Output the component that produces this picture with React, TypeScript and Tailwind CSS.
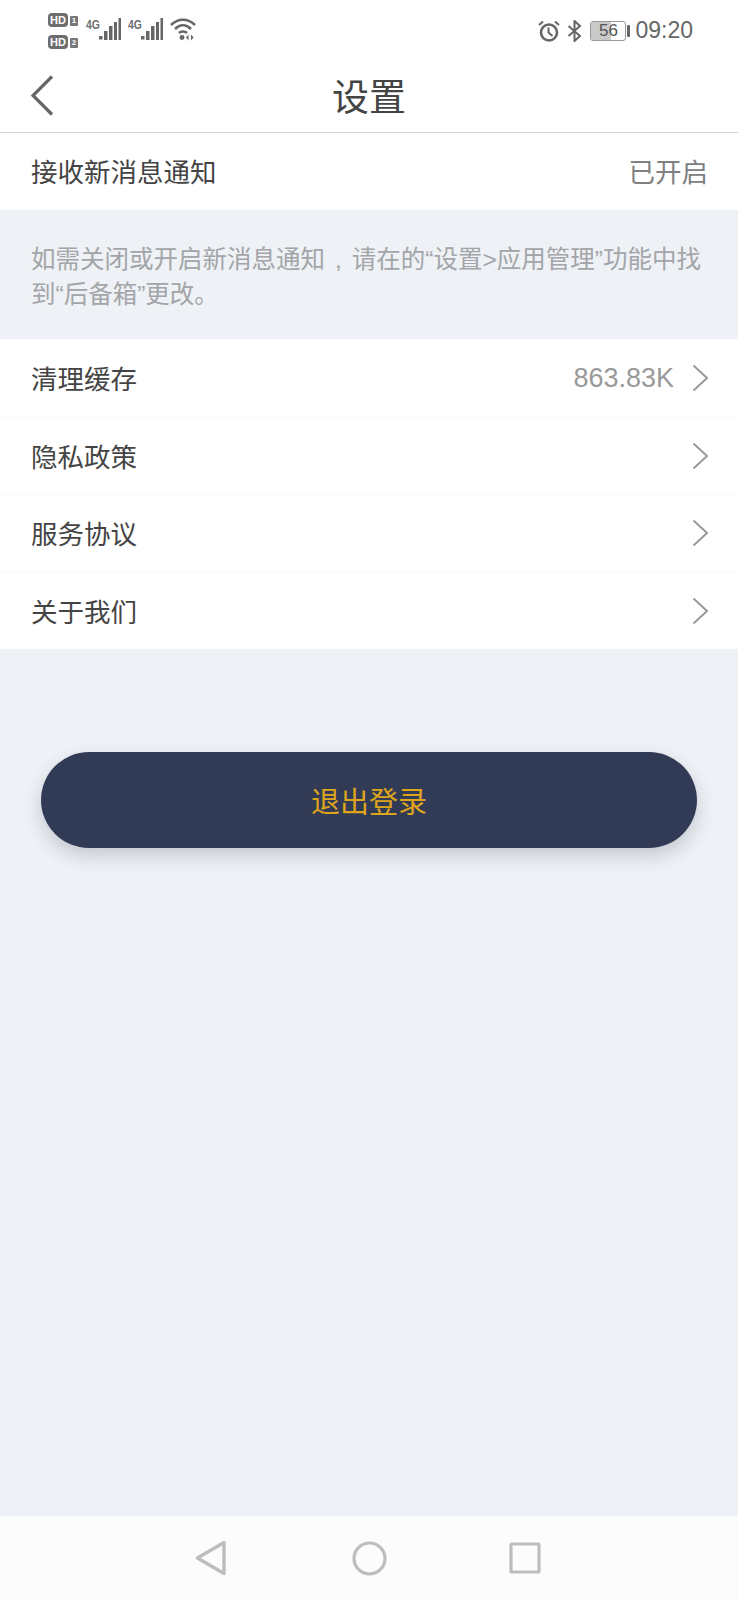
import type { ReactNode } from "react";

const font = { fontFamily: '"Noto Sans CJK SC", "Liberation Sans", sans-serif' };

function HdBadge(props: { sim: string }) {
  return (
    <div className="flex items-center gap-[2px]">
      <span className="flex h-[14px] w-[20px] items-center justify-center rounded-[4px] bg-[#6e6e6e] font-['Liberation_Sans'] text-[11px] leading-none font-bold text-white">
        HD
      </span>
      <span className="mt-[2px] flex h-[10px] w-[8px] items-center justify-center rounded-[1px] bg-[#777] font-['Liberation_Sans'] text-[8px] leading-none font-bold text-white">
        {props.sim}
      </span>
    </div>
  );
}

function Signal() {
  return (
    <div className="flex items-start">
      <span className="w-[13px] origin-left scale-x-[0.8] font-['Liberation_Sans'] text-[13px] leading-[13px] font-bold text-[#6e6e6e]">
        4G
      </span>
      <svg width="22" height="23" viewBox="0 0 22 23" fill="#666">
        <rect x="0" y="18" width="3.5" height="3.5" />
        <rect x="5" y="13" width="3.5" height="9" />
        <rect x="10" y="8" width="3.5" height="14" />
        <rect x="15" y="4" width="3" height="18" />
        <rect x="19.5" y="0" width="2.5" height="22" />
      </svg>
    </div>
  );
}

function Wifi() {
  return (
    <svg width="26" height="23" viewBox="0 0 26 23" fill="none" stroke="#666" strokeWidth="2.5">
      <path d="M1 7 C8 0 18 0 25 7" />
      <path d="M5 11 C10 6 16 6 21 11" />
      <path d="M9 15 C11 13 15 13 17 15" />
      <circle cx="12" cy="19.5" r="2.4" fill="#666" stroke="none" />
      <path d="M18.5 16.5 V22.5 L16 19.5 Z" fill="#666" stroke="none" />
      <path d="M21 16.5 V22.5 L23.5 19.5 Z" fill="#666" stroke="none" />
    </svg>
  );
}

function Alarm() {
  return (
    <svg width="22" height="22" viewBox="0 0 22 22" fill="none" stroke="#666" strokeWidth="2">
      <circle cx="11" cy="12.5" r="8" strokeWidth="2.6" />
      <path d="M10.5 7.5 V12.5 L14.5 16" />
      <path d="M1 5 L5 1.5" />
      <path d="M21 5 L17 1.5" />
    </svg>
  );
}

function Bluetooth() {
  return (
    <svg width="15" height="22" viewBox="0 0 15 22" fill="none" stroke="#666" strokeWidth="2">
      <path d="M1.5 6 L13 16 L7.5 21 V1 L13 6 L1.5 16" />
    </svg>
  );
}

function Battery() {
  return (
    <div className="flex items-center gap-[1px]">
      <div className="relative flex h-[20px] w-[36px] items-center justify-center overflow-hidden rounded-[3px] border border-[#999] font-['Liberation_Sans'] text-[17px] leading-none text-[#555]">
        <div className="absolute inset-y-0 left-0 w-[20px] bg-[#c9c9c9]" />
        <span className="relative">56</span>
      </div>
      <div className="h-[12px] w-[3px] rounded-[1px] bg-[#666]" />
    </div>
  );
}

function Chevron() {
  return (
    <svg width="17" height="28" viewBox="0 0 17 28" fill="none" stroke="#999" strokeWidth="2">
      <path d="M1.5 1.5 L15 14 L1.5 26.5" />
    </svg>
  );
}

function Row(props: { label: string; children?: ReactNode; divider?: boolean }) {
  return (
    <div
      className={`flex h-[77.5px] items-center justify-between pr-[29px] pl-[31px] ${
        props.divider ? "border-t border-[#f7f7f7]" : ""
      }`}
    >
      <span className="text-[26.5px] text-[#444]">{props.label}</span>
      <div className="flex items-center gap-[18px]">
        {props.children}
        <Chevron />
      </div>
    </div>
  );
}

export default function App() {
  return (
    <div className="flex h-[1600px] w-[738px] flex-col bg-[#eef1f5]" style={font}>
      <div className="bg-white">
        <div className="flex h-[62px] items-start justify-between pr-[45px] pl-[48px]">
          <div className="flex items-start">
            <div className="mt-[13px] flex flex-col gap-[8px]">
              <HdBadge sim="1" />
              <HdBadge sim="2" />
            </div>
            <div className="mt-[18px] ml-[8px] flex items-start gap-[7px]">
              <Signal />
              <Signal />
              <Wifi />
            </div>
          </div>
          <div className="mt-[19px] flex items-center">
            <Alarm />
            <div className="ml-[7px]">
              <Bluetooth />
            </div>
            <div className="ml-[8px]">
              <Battery />
            </div>
            <span className="ml-[5px] font-['Liberation_Sans'] text-[23px] leading-[23px] text-[#666]">09:20</span>
          </div>
        </div>

        <div className="relative flex h-[71px] items-center justify-center border-b border-[#d4d4d4]">
          <svg
            className="absolute top-[13px] left-[30px]"
            width="24"
            height="41"
            viewBox="0 0 24 41"
            fill="none"
            stroke="#666"
            strokeWidth="3.2"
          >
            <path d="M22 1.5 L3 20.5 L22 39.5" />
          </svg>
          <span className="-mt-[3px] text-[37px] leading-none text-[#444]">设置</span>
        </div>

        <div className="flex h-[77px] items-center justify-between pr-[30px] pl-[31px]">
          <span className="-mt-[1px] text-[26.5px] text-[#444]">接收新消息通知</span>
          <span className="-mt-[1px] text-[26.5px] text-[#808080]">已开启</span>
        </div>
      </div>

      <div className="h-[129px] pt-[32px] pr-[30px] pl-[31px] font-['Liberation_Sans','Noto_Sans_CJK_SC',sans-serif] text-[24.5px] leading-[35px] text-[#a3a5a8]">
        <div>
          如需关闭或开启新消息通知<span className="px-[10px]">,</span>请在的“设置&gt;应用管理”功能中找
        </div>
        <div>到“后备箱”更改。</div>
      </div>

      <div className="bg-white">
        <Row label="清理缓存">
          <span className="mt-[1px] font-['Liberation_Sans'] text-[27px] text-[#999]">863.83K</span>
        </Row>
        <Row label="隐私政策" divider />
        <Row label="服务协议" divider />
        <Row label="关于我们" divider />
      </div>

      <div className="flex flex-1 flex-col px-[41px] pt-[103px]">
        <button className="flex h-[96px] w-full items-center justify-center rounded-[48px] bg-[#323b55] pt-[2px] text-[29px] text-[#dea51c] shadow-[0_8px_18px_rgba(50,59,85,0.22)]">
          退出登录
        </button>
      </div>

      <div className="flex h-[84px] items-center justify-center bg-[#fcfcfc]">
        <svg width="32" height="36" viewBox="0 0 32 36" fill="none" stroke="#bdbdbd" strokeWidth="3.4" strokeLinejoin="round">
          <path d="M29 2.5 L2.5 18 L29 33.5 Z" />
        </svg>
        <svg className="ml-[125px]" width="35" height="35" viewBox="0 0 35 35" fill="none" stroke="#bdbdbd" strokeWidth="3.2">
          <circle cx="17.5" cy="17.5" r="15.5" />
        </svg>
        <svg className="mr-[3px] ml-[122px]" width="32" height="32" viewBox="0 0 32 32" fill="none" stroke="#bdbdbd" strokeWidth="3.2" strokeLinejoin="round">
          <rect x="2" y="2" width="28" height="28" rx="1" />
        </svg>
      </div>
    </div>
  );
}
